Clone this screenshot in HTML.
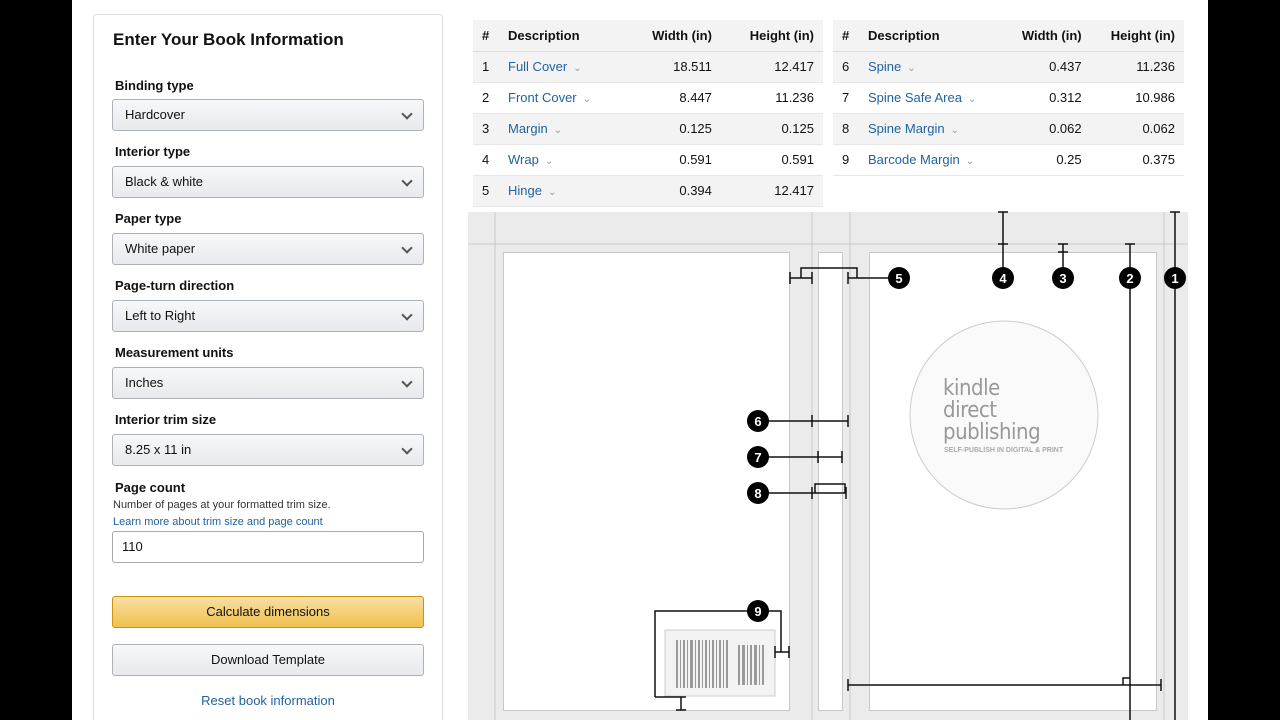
<!DOCTYPE html>
<html style="width:1280px;height:720px;overflow:hidden"><head><meta charset="utf-8"><style>
*{box-sizing:border-box;margin:0;padding:0}
body{width:1280px;height:720px;overflow:hidden;background:#fff;font-family:"Liberation Sans",Arial,sans-serif;color:#111;position:relative}
.bl{position:absolute;top:0;width:72px;height:720px;background:#000}
.panel{position:absolute;left:93px;top:14px;width:350px;height:706px;border:1px solid #ddd;border-bottom:none;border-radius:4px 4px 0 0;background:#fff}
.abs{position:absolute}
h1{position:absolute;left:113px;top:30px;font-size:17px;font-weight:bold;color:#111}
.lab{position:absolute;left:115px;font-size:13px;font-weight:600}
.sel{position:absolute;left:112px;width:312px;height:32px;border:1px solid #adb1b8;border-radius:3px;background:linear-gradient(#f7f8fa,#e7e9ec);font-size:13px;padding-left:12px;line-height:30px;color:#111}
.sel:after{content:"";position:absolute;right:12px;top:10px;width:6px;height:6px;border-right:2px solid #555;border-bottom:2px solid #555;transform:rotate(45deg)}
.btn{position:absolute;left:112px;width:312px;height:32px;border:1px solid;border-radius:3px;font-size:13px;text-align:center;line-height:30px;color:#111}
table{position:absolute;border-collapse:collapse;font-size:13px;top:20px}
td,th{height:31px;padding:0 9px}
th{background:#f3f3f3;font-weight:600;text-align:left;border-bottom:1px solid #ddd}
tr.g td{background:#f3f3f3}
td{border-bottom:1px solid #e7e7e7}
.r{text-align:right}
a{color:#2162a1;text-decoration:none}
.c{color:#999;font-size:10px;margin-left:6px}
</style></head><body>
<div class="bl" style="left:0"></div><div class="bl" style="left:1208px"></div>
<div class="panel"></div>
<h1>Enter Your Book Information</h1>
<div class="lab" style="top:78px">Binding type</div><div class="sel" style="top:99px">Hardcover</div>
<div class="lab" style="top:144px">Interior type</div><div class="sel" style="top:166px">Black &amp; white</div>
<div class="lab" style="top:211px">Paper type</div><div class="sel" style="top:233px">White paper</div>
<div class="lab" style="top:278px">Page-turn direction</div><div class="sel" style="top:300px">Left to Right</div>
<div class="lab" style="top:345px">Measurement units</div><div class="sel" style="top:367px">Inches</div>
<div class="lab" style="top:412px">Interior trim size</div><div class="sel" style="top:434px">8.25 x 11 in</div>
<div class="lab" style="top:480px">Page count</div>
<div class="abs" style="left:113px;top:499px;font-size:11px;color:#333">Number of pages at your formatted trim size.</div>
<div class="abs" style="left:113px;top:516px;font-size:11px"><a>Learn more about trim size and page count</a></div>
<div class="abs" style="left:112px;top:531px;width:312px;height:32px;border:1px solid #aaa;border-radius:3px;font-size:13px;padding-left:9px;line-height:30px">110</div>
<div class="btn" style="top:596px;border-color:#c89411;background:linear-gradient(#f7dfa5,#f0c14b)">Calculate dimensions</div>
<div class="btn" style="top:644px;border-color:#adb1b8;background:linear-gradient(#f7f8fa,#e7e9ec)">Download Template</div>
<div class="abs" style="left:112px;width:312px;top:693px;text-align:center;font-size:13px"><a>Reset book information</a></div>

<table style="left:473px;width:350px">
<tr><th style="width:26px">#</th><th>Description</th><th class="r">Width (in)</th><th class="r">Height (in)</th></tr>
<tr class="g"><td>1</td><td><a>Full Cover</a><span class="c">&#8964;</span></td><td class="r">18.511</td><td class="r">12.417</td></tr>
<tr><td>2</td><td><a>Front Cover</a><span class="c">&#8964;</span></td><td class="r">8.447</td><td class="r">11.236</td></tr>
<tr class="g"><td>3</td><td><a>Margin</a><span class="c">&#8964;</span></td><td class="r">0.125</td><td class="r">0.125</td></tr>
<tr><td>4</td><td><a>Wrap</a><span class="c">&#8964;</span></td><td class="r">0.591</td><td class="r">0.591</td></tr>
<tr class="g"><td>5</td><td><a>Hinge</a><span class="c">&#8964;</span></td><td class="r">0.394</td><td class="r">12.417</td></tr>
</table>
<table style="left:833px;width:351px">
<tr><th style="width:26px">#</th><th>Description</th><th class="r">Width (in)</th><th class="r">Height (in)</th></tr>
<tr class="g"><td>6</td><td><a>Spine</a><span class="c">&#8964;</span></td><td class="r">0.437</td><td class="r">11.236</td></tr>
<tr><td>7</td><td><a>Spine Safe Area</a><span class="c">&#8964;</span></td><td class="r">0.312</td><td class="r">10.986</td></tr>
<tr class="g"><td>8</td><td><a>Spine Margin</a><span class="c">&#8964;</span></td><td class="r">0.062</td><td class="r">0.062</td></tr>
<tr><td>9</td><td><a>Barcode Margin</a><span class="c">&#8964;</span></td><td class="r">0.25</td><td class="r">0.375</td></tr>
</table>

<svg class="abs" style="left:0;top:0" width="1280" height="720">
<rect x="468" y="212" width="720" height="508" fill="#ebebeb"/>
<g stroke="#c8c8c8" stroke-width="1" fill="none">
<line x1="468" y1="244" x2="1188" y2="244"/>
<line x1="495" y1="212" x2="495" y2="720"/>
<line x1="812" y1="212" x2="812" y2="720"/>
<line x1="850" y1="212" x2="850" y2="720"/>
<line x1="1164" y1="212" x2="1164" y2="720"/>
<rect x="503.5" y="252.5" width="286" height="458" fill="#fff"/>
<rect x="818.5" y="252.5" width="24" height="458" fill="#fff"/>
<rect x="869.5" y="252.5" width="287" height="458" fill="#fff"/>
</g>
<ellipse cx="1004" cy="415" rx="94" ry="94" fill="#fafafa" stroke="#ccc"/>
<g fill="#999" font-family="'DejaVu Sans Condensed','Liberation Sans Narrow',sans-serif" letter-spacing="-0.5">
<text x="943" y="395" font-size="22">kindle</text>
<text x="943" y="417" font-size="22">direct</text>
<text x="943" y="439" font-size="22">publishing</text>
</g>
<text x="944" y="452" font-size="7" fill="#aaa" font-weight="bold">SELF-PUBLISH IN DIGITAL &amp; PRINT</text>
<rect x="665" y="630" width="110" height="66" fill="#f3f3f3" stroke="#ccc"/>
<g fill="#999">
<rect x="676" y="640" width="2" height="48"/><rect x="680" y="640" width="1" height="48"/><rect x="683" y="640" width="2" height="48"/><rect x="687" y="640" width="1" height="48"/><rect x="690" y="640" width="3" height="48"/><rect x="695" y="640" width="1" height="48"/><rect x="698" y="640" width="2" height="48"/><rect x="702" y="640" width="1" height="48"/><rect x="705" y="640" width="2" height="48"/><rect x="709" y="640" width="1" height="48"/><rect x="712" y="640" width="2" height="48"/><rect x="716" y="640" width="1" height="48"/><rect x="719" y="640" width="2" height="48"/><rect x="723" y="640" width="1" height="48"/><rect x="726" y="640" width="2" height="48"/>
<rect x="738" y="645" width="2" height="40"/><rect x="742" y="645" width="3" height="40"/><rect x="747" y="645" width="1" height="40"/><rect x="750" y="645" width="2" height="40"/><rect x="754" y="645" width="3" height="40"/><rect x="759" y="645" width="1" height="40"/><rect x="762" y="645" width="2" height="40"/>
</g>
<g stroke="#111" stroke-width="1.5" fill="none">
<path d="M1003 212V278M998 212h10M998 244h10"/>
<path d="M1063 244V278M1058 244h10M1058 252h10"/>
<path d="M1130 244V720M1125 244h10"/>
<path d="M1175 212V720M1170 212h10"/>
<path d="M790 278h22M790 272v12M812 272v12M801 278v-10h56v10M848 278h52M848 272v12"/>
<path d="M758 421h90M812 415v12M848 415v12"/>
<path d="M758 457h84M818 451v12M842 451v12"/>
<path d="M758 493h54M812 487v12M846 487v12M815 493v-9h30v9M812 493h34"/>
<path d="M655 697V611h126v41M775 652h14M789 646v12M775 646v12"/>
<path d="M655 697h26M681 697v13M676 697h10M676 710h10"/>
<path d="M848 685h313M848 679v12M1161 679v12M1123 685v-7h7"/>
</g>
<g font-size="13" font-weight="bold" fill="#fff" text-anchor="middle">
<circle cx="899" cy="278" r="11" fill="#000"/><text x="899" y="283">5</text>
<circle cx="1003" cy="278" r="11" fill="#000"/><text x="1003" y="283">4</text>
<circle cx="1063" cy="278" r="11" fill="#000"/><text x="1063" y="283">3</text>
<circle cx="1130" cy="278" r="11" fill="#000"/><text x="1130" y="283">2</text>
<circle cx="1175" cy="278" r="11" fill="#000"/><text x="1175" y="283">1</text>
<circle cx="758" cy="421" r="11" fill="#000"/><text x="758" y="426">6</text>
<circle cx="758" cy="457" r="11" fill="#000"/><text x="758" y="462">7</text>
<circle cx="758" cy="493" r="11" fill="#000"/><text x="758" y="498">8</text>
<circle cx="758" cy="611" r="11" fill="#000"/><text x="758" y="616">9</text>
</g>
</svg>
</body></html>
